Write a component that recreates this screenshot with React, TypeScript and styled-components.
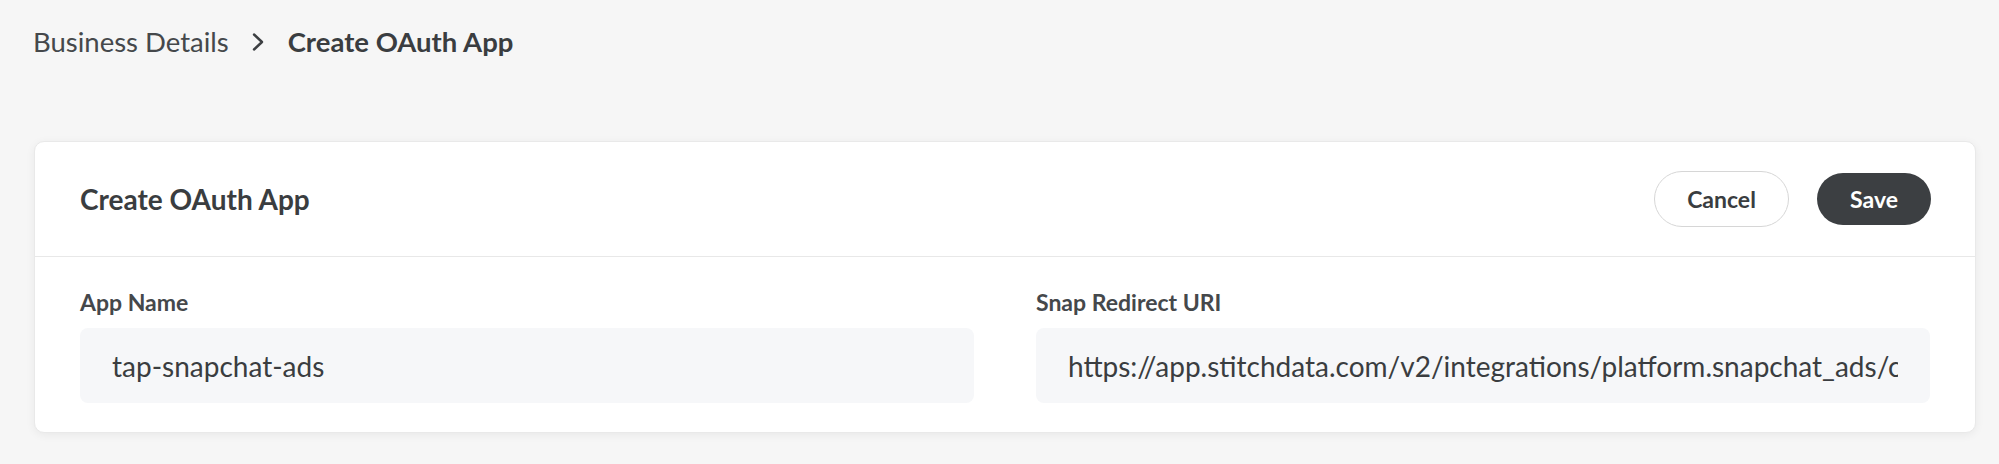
import React from 'react'
import styled, { createGlobalStyle } from 'styled-components'

const GlobalStyle = createGlobalStyle`
  html, body {
    margin: 0;
    padding: 0;
    background: #f6f6f6;
  }

  body {
    font-family: Lato, "Open Sans", sans-serif;
    color: #3c3f42;
  }
`

const Page = styled.div`
  padding: 25px 23px 32px 34px;
`

const Breadcrumb = styled.nav`
  display: flex;
  align-items: center;
  font-size: 27.5px;
  margin-left: -1px;
`

const Crumb = styled.span<{ $current?: boolean }>`
  font-weight: ${p => (p.$current ? 700 : 400)};
  color: ${p => (p.$current ? '#3a3d40' : '#45484b')};
`

const Chevron = styled.svg`
  width: 14px;
  height: 20px;
  margin: 0 23px 0 22px;
`

const Card = styled.section`
  margin-top: 83px;
  background: #fff;
  border: 1px solid #e9e9e9;
  border-radius: 10px;
  box-shadow: 0 2px 10px rgba(0, 0, 0, .06);
  overflow: hidden;
`

const Header = styled.header`
  display: flex;
  align-items: center;
  justify-content: space-between;
  height: 114px;
  padding: 0 44px 0 45px;
  border-bottom: 1px solid #e8e8e8;
`

const Title = styled.h2`
  margin: 0;
  font-size: 28px;
  font-weight: 700;
  color: #3a3d40;
`

const Actions = styled.div`
  display: flex;
  align-items: center;
  gap: 28px;
`

const Button = styled.button<{ $primary?: boolean }>`
  font-family: Lato, "Open Sans", sans-serif;
  font-size: 23px;
  font-weight: 700;
  border-radius: 999px;
  cursor: pointer;
  height: ${p => (p.$primary ? '52px' : '56px')};
  width: ${p => (p.$primary ? '114px' : '135px')};
  color: ${p => (p.$primary ? '#fff' : '#3a3d40')};
  background: ${p => (p.$primary ? '#3c3f42' : '#fff')};
  border: ${p => (p.$primary ? 'none' : '1.5px solid #d6d6d6')};
`

const Body = styled.div`
  display: grid;
  grid-template-columns: 1fr 1fr;
  column-gap: 62px;
  padding: 31px 45px 29px;
`

const Field = styled.label`
  display: flex;
  flex-direction: column;
  gap: 12px;
  min-width: 0;
`

const Label = styled.span`
  font-size: 23px;
  font-weight: 700;
  color: #45484b;
`

const Input = styled.input`
  box-sizing: border-box;
  width: 100%;
  height: 75px;
  padding: 0 32px;
  border: none;
  border-radius: 8px;
  background: #f6f7f9;
  font-family: Lato, "Open Sans", sans-serif;
  font-size: 28px;
  color: #3a3d40;
  outline: none;
`

const fields = [
  { label: 'App Name', value: 'tap-snapchat-ads' },
  { label: 'Snap Redirect URI', value: 'https://app.stitchdata.com/v2/integrations/platform.snapchat_ads/callback' },
]

const App = () => {
  return (
    <>
      <GlobalStyle />
      <Page>
        <Breadcrumb>
          <Crumb>Business Details</Crumb>
          <Chevron viewBox="0 0 14 20" fill="none">
            <path d="M3 2.5l8 7.5-8 7.5" stroke="#3c3f42" strokeWidth="2.4" strokeLinecap="round" strokeLinejoin="round" />
          </Chevron>
          <Crumb $current>Create OAuth App</Crumb>
        </Breadcrumb>
        <Card>
          <Header>
            <Title>Create OAuth App</Title>
            <Actions>
              <Button>Cancel</Button>
              <Button $primary>Save</Button>
            </Actions>
          </Header>
          <Body>
            {fields.map(f => (
              <Field key={f.label}>
                <Label>{f.label}</Label>
                <Input readOnly value={f.value} />
              </Field>
            ))}
          </Body>
        </Card>
      </Page>
    </>
  )
}

export default App
